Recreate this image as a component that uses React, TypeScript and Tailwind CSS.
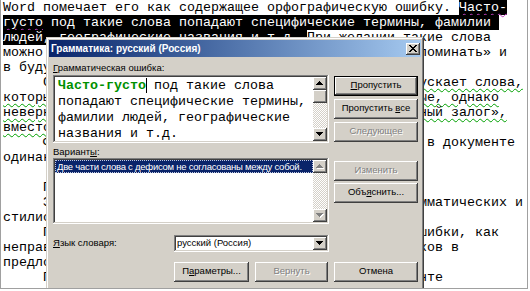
import React from 'react';

const mono = "font-[family-name:'Liberation_Mono','Courier_New',monospace]";
const sans = "font-[family-name:'Liberation_Sans',Arial,sans-serif]";
const raised = 'shadow-[inset_-1px_-1px_#404040,inset_1px_1px_#ffffff,inset_-2px_-2px_#808080,inset_2px_2px_#d4d0c8]';
const winEdge = 'shadow-[inset_-1px_-1px_#404040,inset_1px_1px_#d4d0c8,inset_-2px_-2px_#808080,inset_2px_2px_#ffffff]';
const sunken = 'shadow-[inset_-1px_-1px_#ffffff,inset_1px_1px_#808080,inset_-2px_-2px_#d4d0c8,inset_2px_2px_#404040]';
const hl = 'bg-black text-white';
const wavy = 'underline decoration-wavy decoration-[#00a000] decoration-1 underline-offset-2';
const wavyInv = 'underline decoration-wavy decoration-[#c040c0] decoration-1 underline-offset-2';
const dither = 'bg-[image:repeating-conic-gradient(#d4d0c8_0_25%,#ffffff_0_50%)] bg-[length:2px_2px]';

const pad = (s: string, n = 52) => s.padEnd(n, ' ');

function Arrow({ dir, disabled }: { dir: 'up' | 'down'; disabled?: boolean }) {
  const pts = dir === 'up' ? '3.5,0 7,4 0,4' : '0,0 7,0 3.5,4';
  return (
    <svg width="8" height="5" viewBox="0 0 8 5" shapeRendering="crispEdges">
      {disabled && <polygon points={pts} fill="#ffffff" transform="translate(1,1)" />}
      <polygon points={pts} fill={disabled ? '#808080' : '#000000'} />
    </svg>
  );
}

function ArrowBtn({ dir, disabled, h = 'h-[13px]' }: { dir: 'up' | 'down'; disabled?: boolean; h?: string }) {
  return (
    <div className={`flex w-[14px] ${h} items-center justify-center bg-[#d4d0c8] ${raised}`}>
      <Arrow dir={dir} disabled={disabled} />
    </div>
  );
}

function Btn({
  children,
  w = 'w-[84px]',
  disabled,
  def,
}: {
  children: React.ReactNode;
  w?: string;
  disabled?: boolean;
  def?: boolean;
}) {
  return (
    <div className={`${w} h-[20px] bg-[#d4d0c8] ${def ? 'border border-black' : ''}`}>
      <div
        className={`flex h-full items-center justify-center pb-px ${raised} ${
          disabled ? 'text-[#808080] [text-shadow:1px_1px_0_#ffffff]' : 'text-black'
        }`}
      >
        {children}
      </div>
    </div>
  );
}

function Dialog() {
  return (
    <div className={`absolute left-[45px] top-[37px] h-[262px] w-[378px] bg-[#d4d0c8] p-[3px] ${winEdge} ${sans} text-[9.5px] text-black`}>
      {/* title bar */}
      <div className="flex h-[17px] items-center bg-linear-to-r from-[#0a246a] to-[#a6caf0] pl-[2px] pr-[1px]">
        <span className="text-[10px] font-bold text-white">Грамматика: русский (Россия)</span>
        <div className={`ml-auto flex h-[12px] w-[14px] items-center justify-center bg-[#d4d0c8] ${raised}`}>
          <svg width="8" height="7" viewBox="0 0 8 7" shapeRendering="crispEdges">
            <path d="M0 0h2v1h1v1h2v-1h1v-1h2v1h-1v1h-1v1h-1v1h1v1h1v1h1v1h-2v-1h-1v-1h-2v1h-1v1h-2v-1h1v-1h1v-1h1v-1h-1v-1h-1v-1h-1z" fill="#000" />
          </svg>
        </div>
      </div>

      {/* body */}
      <div className="pl-[4px] pr-[3px]">
        <div className="grid grid-cols-[276px_84px] gap-x-[5px]">
          <div className="flex flex-col">
            <div className="mt-[5px] h-[12px] leading-[12px]">
              <span className="underline">Г</span>рамматическая ошибка:
            </div>
            <div className={`mt-[1px] flex h-[68px] bg-white p-[2px] ${sunken}`}>
              <div className={`flex-1 pl-[3px] pt-[1px] ${mono} text-[13.33px] leading-[16px] whitespace-pre text-black`}>
                <div>
                  <span className="font-bold text-[#009000]">Часто-густо</span>
                  <span className="-mr-px inline-block h-[15px] w-px bg-black align-[-4px]" /> под такие слова
                </div>
                <div>попадают специфические термины,</div>
                <div>фамилии людей, географические</div>
                <div>названия и т.д.</div>
              </div>
              <div className="flex w-[14px] flex-col">
                <ArrowBtn dir="up" />
                <div className={`h-[13px] bg-[#d4d0c8] ${raised}`} />
                <div className={`flex-1 ${dither}`} />
                <ArrowBtn dir="down" />
              </div>
            </div>
            <div className="mt-[3px] h-[12px] leading-[12px]">
              Вариант<span className="underline">ы</span>:
            </div>
            <div className={`flex h-[66px] bg-white p-[2px] ${sunken}`}>
              <div className="min-w-0 flex-1">
                <div className="h-[13px] overflow-hidden border border-dotted border-[#c0c8e0] bg-[#0a246a] pl-[1px] leading-[11px] tracking-[-0.25px] whitespace-nowrap text-white">
                  Две части слова с дефисом не согласованы между собой.
                </div>
              </div>
              <div className="flex w-[14px] flex-col">
                <ArrowBtn dir="up" disabled />
                <div className={`flex-1 ${dither}`} />
                <ArrowBtn dir="down" disabled />
              </div>
            </div>
          </div>

          <div className="flex flex-col">
            <div className="mt-[19px]">
              <Btn def>
                <span>
                  <span className="underline">П</span>ропустить
                </span>
              </Btn>
            </div>
            <div className="mt-[3px]">
              <Btn>
                <span>
                  Пропустить <span className="underline">в</span>се
                </span>
              </Btn>
            </div>
            <div className="mt-[3px]">
              <Btn disabled>Следующее</Btn>
            </div>
            <div className="mt-[19px]">
              <Btn disabled>Изменить</Btn>
            </div>
            <div className="mt-[2px]">
              <Btn>
                <span>
                  Объ<span className="underline">я</span>снить...
                </span>
              </Btn>
            </div>
          </div>
        </div>

        {/* dictionary language */}
        <div className="mt-[11px] flex items-center">
          <div className="w-[121px]">
            <span className="underline">Я</span>зык словаря:
          </div>
          <div className={`flex h-[17px] w-[155px] items-center bg-white p-[2px] ${sunken}`}>
            <span className="flex-1 pl-[1px]">русский (Россия)</span>
            <ArrowBtn dir="down" />
          </div>
        </div>

        {/* bottom buttons */}
        <div className="mt-[10px] flex gap-[6px] pl-[121px]">
          <Btn w="w-[75px]">
            <span>
              П<span className="underline">а</span>раметры...
            </span>
          </Btn>
          <Btn w="w-[73px]" disabled>
            Вернуть
          </Btn>
          <Btn>Отмена</Btn>
        </div>
      </div>
    </div>
  );
}

export default function App() {
  return (
    <div className="h-[291px] w-[530px] overflow-hidden bg-white">
      <div className="relative h-[289px] w-[528px] overflow-hidden border-x border-b border-[#a0a0a0] bg-white">
        <div className={`pl-[2px] ${mono} text-[13.33px] leading-[15px] whitespace-pre text-black`}>
          <div>
            Word помечает его как содержащее орфографическую ошибку. <span className={`${hl} ${wavyInv}`}>Часто-</span>
          </div>
          <div>
            <span className={hl}>
              <span className={wavyInv}>густо</span> под такие слова попадают специфические термины, фамилии{' '}
            </span>
          </div>
          <div>
            <span className={hl}>людей, географические названия и т.д. </span>При желании такие слова
          </div>
          <div>{pad('можно добавить в словарь, и Word будет их за')}поминать» и</div>
          <div>в будущем не станет их подчеркивать.</div>
          <div>
            {pad('     Следует помнить, что Word иногда пр')}
            <span className={wavy}>ускает слова,</span>
          </div>
          <div>
            <span className={wavy}>{pad('которые написаны без ошибок, но употреблены')}ые, однако</span>
          </div>
          <div>
            <span className={wavy}>{pad('неверно, например «действительный» и «страдатель')}ный залог»,</span>
          </div>
          <div>
            <span className={wavy}>вместо нужного слова.</span>
          </div>
          <div>{pad('     Функция проверки работает для всех слов', 53)}в документе</div>
          <div>одинаково.</div>
          <div> </div>
          <div>     Проверка грамматики</div>
          <div>{pad('     Здесь Word находит ошибки: грамм')}мматических и</div>
          <div>стилистических правил.</div>
          <div>{pad('     Программа подчеркивает такие о')}шибки, как</div>
          <div>{pad('неправильное согласование слов, пропуск зна')}ков в</div>
          <div>предложении.</div>
          <div>{pad('     Подробнее об этом в докуме')}нте</div>
        </div>
        <Dialog />
      </div>
    </div>
  );
}
